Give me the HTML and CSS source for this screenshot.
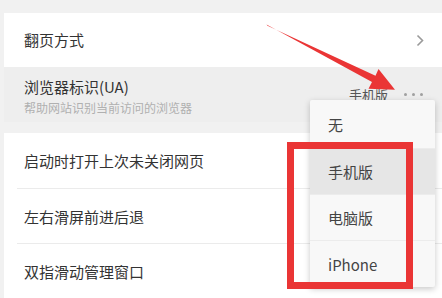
FILE: index.html
```html
<!DOCTYPE html>
<html lang="zh">
<head>
<meta charset="utf-8">
<link rel="stylesheet" href="styles.css">
</head>
<body>
<div class="page">
  <div class="card">
    <div class="row row-nav">
      <span class="title">翻页方式</span>
      <svg class="chev" width="8" height="13" viewBox="0 0 8 13"><path d="M1.5 1.5 L6.5 6.5 L1.5 11.5" fill="none" stroke="#9a9a9a" stroke-width="1.6"/></svg>
    </div>
    <div class="row row-ua">
      <div class="texts">
        <span class="title">浏览器标识(UA)</span>
        <span class="sub">帮助网站识别当前访问的浏览器</span>
      </div>
      <span class="value">手机版</span>
      <span class="dots"><i></i><i></i><i></i></span>
    </div>
  </div>
  <div class="card card2">
    <div class="row row-line"><span class="title">启动时打开上次未关闭网页</span></div>
    <div class="row row-line"><span class="title">左右滑屏前进后退</span></div>
    <div class="row"><span class="title">双指滑动管理窗口</span></div>
  </div>

  <div class="menu">
    <div class="item item1">无</div>
    <div class="item item2 active">手机版</div>
    <div class="item item3">电脑版</div>
    <div class="item item4">iPhone</div>
  </div>
  <div class="redbox"></div>
  <svg class="arrow" width="442" height="298" viewBox="0 0 442 298">
    <polygon fill="#ea3535" points="266.5,24.5 267.5,25.8 375.5,75.8 378.5,69 395,89.8 368.5,88.8 372,82"/>
  </svg>
</div>
</body>
</html>
```
FILE: styles.css
```css
html, body {
  margin: 0;
  padding: 0;
}
body {
  width: 442px;
  height: 298px;
  overflow: hidden;
  background: #f1f1f1;
  font-family: "Noto Sans CJK SC", "Noto Sans", sans-serif;
}
.page {
  position: relative;
  width: 442px;
  height: 298px;
  padding-top: 13px;
  box-sizing: border-box;
}
.card {
  margin-left: 4px;
  background: #ffffff;
  display: flex;
  flex-direction: column;
}
.card2 {
  margin-top: 11px;
}
.row {
  height: 55px;
  display: flex;
  align-items: center;
  padding-left: 20px;
  padding-right: 18px;
  box-sizing: border-box;
  position: relative;
}
.row-nav {
  height: 54px;
  justify-content: space-between;
}
.card2 .row:first-child {
  height: 56px;
}
.row-line::after {
  content: "";
  position: absolute;
  left: 13px;
  right: 0;
  bottom: 0;
  height: 1px;
  background: #ebebeb;
}
.title {
  font-size: 15px;
  color: #333333;
  line-height: 20px;
}
.chev {
  display: block;
}
.row-ua {
  background: #eeeeee;
  align-items: flex-start;
  padding-top: 10px;
}
.texts {
  display: flex;
  flex-direction: column;
  flex: 1;
  gap: 2px;
}
.sub {
  font-size: 12px;
  color: #b0b0b0;
  line-height: 17px;
}
.value {
  font-size: 13px;
  color: #555555;
  line-height: 18px;
  margin-top: 9px;
  margin-right: 16px;
}
.dots {
  display: flex;
  gap: 5px;
  margin-top: 16px;
  margin-right: 1px;
}
.dots i {
  display: block;
  width: 3px;
  height: 3px;
  border-radius: 50%;
  background: #a0a0a0;
}
.menu {
  position: absolute;
  left: 310px;
  top: 100px;
  width: 125px;
  background: #f8f8f8;
  box-shadow: 0 2px 6px rgba(0, 0, 0, 0.22);
  border-radius: 2px;
  display: flex;
  flex-direction: column;
}
.item {
  display: flex;
  align-items: center;
  padding-left: 18px;
  font-size: 15px;
  color: #444444;
  border-top: 1px solid #ececec;
}
.item1 { height: 48px; border-top: none; }
.item2 { height: 45px; }
.item3 { height: 45px; }
.item4 { height: 46px; }
.item.active {
  background: #e6e6e6;
}
.redbox {
  position: absolute;
  left: 287px;
  top: 142px;
  width: 126px;
  height: 147px;
  box-sizing: border-box;
  border: 7px solid #ea3535;
}
.arrow {
  position: absolute;
  left: 0;
  top: 0;
}
```
